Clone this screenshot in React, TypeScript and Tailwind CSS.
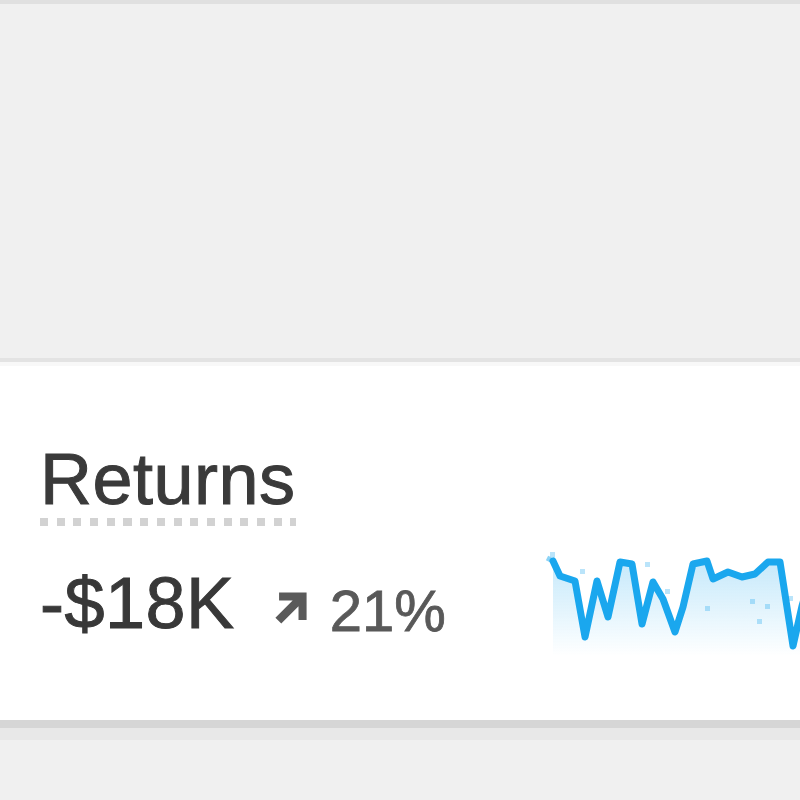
import React from "react";

const pts: [number, number][] = [
  [8, 17], [15, 32], [30, 37], [40, 93], [52, 37], [63, 73], [75, 18], [87, 20],
  [97, 80], [108, 38], [118, 55], [130, 88], [138, 63], [148, 20], [162, 17],
  [168, 35], [183, 28], [197, 33], [210, 30], [223, 18], [235, 18], [248, 102],
  [257, 62], [268, 25],
];

const dots: [number, number][] = [
  [5, 8], [35, 25], [100, 18], [120, 45], [160, 62], [205, 55], [212, 75], [220, 60], [243, 52], [262, 23],
];

function Spark() {
  const line = pts.map((p, i) => `${i ? "L" : "M"}${p[0]} ${p[1]}`).join(" ");
  const area = `${line} L268 112 L8 112 Z`;
  return (
    <svg width="270" height="115" viewBox="0 0 270 115" className="flex-none block blur-[0.5px]">
      <defs>
        <linearGradient id="g" x1="0" y1="0" x2="0" y2="1">
          <stop offset="0" stopColor="#1aa7ee" stopOpacity="0.25" />
          <stop offset="1" stopColor="#1aa7ee" stopOpacity="0" />
        </linearGradient>
      </defs>
      <path d={area} fill="url(#g)" />
      {dots.map((d, i) => (
        <rect key={i} x={d[0]} y={d[1]} width="5" height="5" fill="#1aa7ee" opacity="0.3" />
      ))}
      <path d="M2 14 L8 17" stroke="#1aa7ee" strokeWidth="5" fill="none" opacity="0.5" />
      <path d={line} stroke="#1aa7ee" strokeWidth="7" fill="none" strokeLinejoin="round" strokeLinecap="round" />
    </svg>
  );
}

export default function App() {
  return (
    <div
      className="w-[800px] h-[800px] overflow-hidden bg-[#f0f0f0] border-t-4 border-[#e0e0e0]"
      style={{ fontFamily: '"Liberation Sans", Arial, sans-serif' }}
    >
      <div className="h-[354px]" />
      <div className="h-1 bg-[#e3e3e3]" />
      <div className="h-1 bg-[#f8f8f8]" />
      <div className="h-[354px] bg-white overflow-hidden pl-[40px] pt-[77px]">
        <div className="inline-block">
          <div className="text-[72px] leading-none text-[#3a3a3a] tracking-[0.5px] [-webkit-text-stroke:1px_#3a3a3a]">Returns</div>
          <div className="mt-[3px] h-[8px] w-[256px] bg-[repeating-linear-gradient(90deg,#d2d2d2_0,#d2d2d2_8px,transparent_8px,transparent_16.7px)]" />
        </div>
        <div className="mt-[20px] flex items-center w-[800px]">
          <div className="w-[505px] flex-none flex items-baseline">
            <span className="text-[72px] leading-none text-[#383838] tracking-[0.5px] [-webkit-text-stroke:1px_#383838]">-$18K</span>
            <span className="ml-[34px] flex items-center translate-y-[5px] text-[#595959]">
              <svg width="44" height="44" viewBox="0 0 24 24" className="block -translate-y-[3px]">
                <path d="M5.5 3.5v4.4h7.4L3.5 17.3 6.7 20.5 16.1 11.1v7.4H20.5V3.5z" fill="#5a5a5a" />
              </svg>
              <span className="ml-[17px] text-[58px] leading-none [-webkit-text-stroke:0.8px_#595959]">21%</span>
            </span>
          </div>
          <div className="-mt-[2px]">
            <Spark />
          </div>
        </div>
      </div>
      <div className="h-2 bg-[#d6d6d6]" />
      <div className="h-3 bg-[#e8e8e8]" />
    </div>
  );
}
